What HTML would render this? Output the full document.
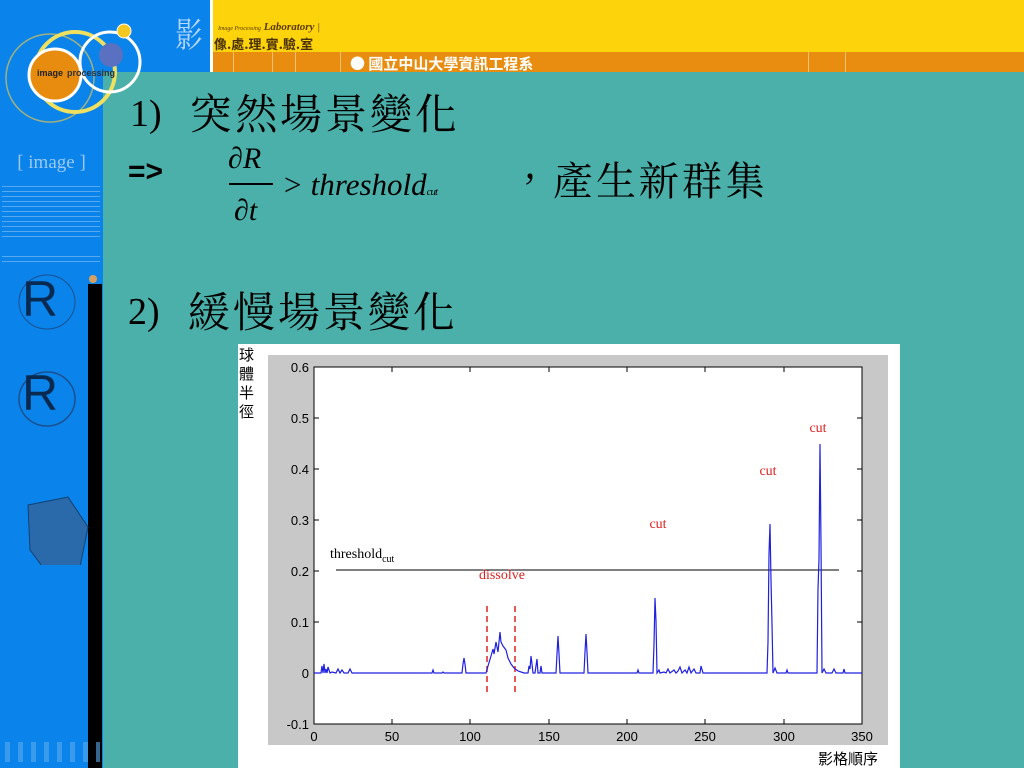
<!DOCTYPE html>
<html><head><meta charset="utf-8"><style>
*{margin:0;padding:0}
body{width:1024px;height:768px;position:relative;overflow:hidden;background:#4bb0a9;font-family:"Liberation Serif","Noto Serif CJK TC",serif}
.a{position:absolute}
.cjk{font-family:"Liberation Serif","Noto Serif CJK TC","Noto Serif CJK SC",serif}
</style></head><body>
<div class="a" style="left:0;top:0;width:210px;height:72px;background:#0a84ea"></div>
<div class="a" style="left:0;top:72px;width:103px;height:696px;background:#0a84ea"></div>
<div class="a" style="left:88px;top:284px;width:14px;height:484px;background:#000"></div>
<div class="a" style="left:89px;top:275px;width:8px;height:8px;border-radius:50%;background:#d8a060"></div>
<div class="a" style="left:210px;top:0;width:3px;height:72px;background:#fff"></div>
<div class="a" style="left:213px;top:0;width:811px;height:55px;background:#fdd30c"></div>
<div class="a" style="left:213px;top:52px;width:811px;height:20px;background:#e88d10"></div>
<div class="a" style="left:233px;top:52px;width:1px;height:20px;background:#f6c070"></div>
<div class="a" style="left:272px;top:52px;width:1px;height:20px;background:#f6c070"></div>
<div class="a" style="left:295px;top:52px;width:1px;height:20px;background:#f6c070"></div>
<div class="a" style="left:340px;top:52px;width:1px;height:20px;background:#f6c070"></div>
<div class="a" style="left:808px;top:52px;width:1px;height:20px;background:#f6c070"></div>
<div class="a" style="left:845px;top:52px;width:1px;height:20px;background:#f6c070"></div>
<div class="a" style="left:350px;top:53px;width:250px;font:bold 15px 'Noto Sans CJK TC',sans-serif;color:#fff;white-space:nowrap">● 國立中山大學資訊工程系</div>
<div class="a" style="left:218px;top:21px;font:italic 11px 'Liberation Serif';color:#5a3a00"><span style="font-size:6px">Image Processing</span> <b>Laboratory</b> |</div>
<div class="a" style="left:214px;top:34px;font:bold 13px 'Noto Sans CJK TC',sans-serif;color:#4a3000;white-space:nowrap">像.處.理.實.驗.室</div>
<div class="a cjk" style="left:172px;top:8px;font-size:34px;color:#b8d8ff;transform:scaleX(.8)">影</div>
<svg class="a" style="left:0;top:0" width="210" height="130">
<circle cx="50" cy="78" r="44" fill="none" stroke="#a0b080" stroke-width="1.5"/>
<circle cx="75" cy="72" r="40" fill="none" stroke="#f0e060" stroke-width="4"/>
<circle cx="110" cy="62" r="30" fill="none" stroke="#fff" stroke-width="3"/>
<circle cx="111" cy="55" r="12" fill="#5a70c0"/>
<circle cx="124" cy="31" r="7" fill="#f5c820" stroke="#fff"/>
<circle cx="55" cy="75" r="26" fill="#e88c10" stroke="#fff" stroke-width="3"/>
<text x="37" y="76" font-size="9" font-family="Liberation Sans" font-weight="bold" fill="#222">image</text>
<text x="67" y="76" font-size="9" font-family="Liberation Sans" font-weight="bold" fill="#333">processing</text>
</svg>
<div class="a" style="left:0;top:152px;width:103px;text-align:center;font:19px 'Liberation Serif';color:#9cc8f0">[ image ]</div>
<div class="a" style="left:2px;top:182px;width:98px;height:55px;background:repeating-linear-gradient(#0a84ea 0 4px,#5aa8ee 4px 5px)"></div>
<div class="a" style="left:2px;top:252px;width:98px;height:12px;background:repeating-linear-gradient(#0a84ea 0 4px,#5aa8ee 4px 5px)"></div>
<svg class="a" style="left:10px;top:265px" width="80" height="300">
<ellipse cx="37" cy="37" rx="28" ry="27" fill="none" stroke="#1a5090" stroke-width="1"/>
<ellipse cx="37" cy="134" rx="28" ry="27" fill="none" stroke="#1a5090" stroke-width="1.5"/>
<path d="M18 240l40 -8l20 30l-8 40l-35 3l-15-20z" fill="#2a6aaa" stroke="#124070"/>
</svg>
<div class="a" style="left:22px;top:270px;font:50px 'Liberation Sans';color:#082a50">R</div>
<div class="a" style="left:22px;top:364px;font:50px 'Liberation Sans';color:#082a50">R</div>
<div class="a" style="left:5px;top:742px;width:95px;height:20px;background:repeating-linear-gradient(90deg,#5aa8ee 0 5px,transparent 5px 13px);opacity:.6"></div>

<div class="a" style="left:130px;top:92px;font:38px 'Liberation Serif';color:#000">1)</div>
<div class="a cjk" style="left:190px;top:82px;font-size:42px;letter-spacing:3px;color:#000;white-space:nowrap">突然場景變化</div>
<div class="a" style="left:128px;top:155px;font:bold 30px 'Liberation Sans';color:#000">=&gt;</div>
<div class="a" style="left:228px;top:142px;font:italic 30px 'Liberation Serif'">∂R</div>
<div class="a" style="left:229px;top:183px;width:44px;height:1.5px;background:#000"></div>
<div class="a" style="left:234px;top:194px;font:italic 30px 'Liberation Serif'">∂t</div>
<div class="a" style="left:282px;top:167px;font:italic 31px 'Liberation Serif';white-space:nowrap">&gt; threshold<span style="font-size:11px;letter-spacing:-1px">cut</span></div>
<div class="a cjk" style="left:510px;top:150px;font-size:40px;letter-spacing:3px;white-space:nowrap">，產生新群集</div>
<div class="a" style="left:128px;top:290px;font:38px 'Liberation Serif';color:#000">2)</div>
<div class="a cjk" style="left:188px;top:280px;font-size:42px;letter-spacing:3px;white-space:nowrap">緩慢場景變化</div>

<svg class="a" style="left:238px;top:344px" width="662" height="424" font-family="Liberation Sans">
<rect width="662" height="424" fill="#fff"/>
<rect x="30" y="11" width="620" height="390" fill="#c8c8c8"/>
<rect x="76" y="23" width="548" height="357" fill="#fff" stroke="#000"/>
<g font-size="13" fill="#000" text-anchor="end">
<text x="71" y="28">0.6</text><text x="71" y="79">0.5</text><text x="71" y="130">0.4</text><text x="71" y="181">0.3</text><text x="71" y="232">0.2</text><text x="71" y="283">0.1</text><text x="71" y="334">0</text><text x="71" y="385">-0.1</text>
</g>
<g font-size="13" text-anchor="middle">
<text x="76" y="397">0</text><text x="154" y="397">50</text><text x="232" y="397">100</text><text x="311" y="397">150</text><text x="389" y="397">200</text><text x="467" y="397">250</text><text x="546" y="397">300</text><text x="624" y="397">350</text>
</g>
<g stroke="#000" stroke-width="1">
<path d="M76 74h5M76 125h5M76 176h5M76 227h5M76 278h5M76 329h5M624 74h-5M624 125h-5M624 176h-5M624 227h-5M624 278h-5M624 329h-5M154 380v-5M232 380v-5M311 380v-5M389 380v-5M467 380v-5M546 380v-5M154 23v5M232 23v5M311 23v5M389 23v5M467 23v5M546 23v5"/>
<path d="M98 226H601"/>
</g>
<text x="92" y="214" font-family="Liberation Serif" font-size="14">threshold<tspan font-size="10" dy="4">cut</tspan></text>
<g fill="#e02020" font-family="Liberation Serif" font-size="14" text-anchor="middle">
<text x="264" y="235">dissolve</text><text x="420" y="184">cut</text><text x="530" y="131">cut</text><text x="580" y="88">cut</text>
</g>
<path d="M249 262v90M277 262v90" stroke="#e02020" stroke-width="1.5" stroke-dasharray="6,4"/>
<polyline fill="none" stroke="#2020e0" stroke-width="1.2" points="76,329 83,329 84,322 85,329 86,320 87,329 88,325 89,329 90,323 92,329 94,328 98,329 100,325 102,329 104,326 106,329 110,329 112,325 114,329 194,329 195,326 196,329 204,329 205,328 206,329 224,329 225,320 226,314 227,320 228,329 248,329 250,322 253,312 255,305 256,310 258,298 260,308 262,288 263,298 265,302 268,306 270,314 273,320 276,324 280,327 286,329 290,329 291,322 292,325 293,312 294,320 295,329 297,329 298,322 299,315 300,329 302,329 303,322 304,329 318,329 319,310 320,292 321,310 322,329 346,329 347,308 348,290 349,308 350,329 399,329 400,326 401,329 415,329 416,300 417,254 418,277 419,329 421,326 422,329 426,328 428,329 430,325 432,329 436,326 438,329 440,327 442,323 444,329 447,326 449,329 451,323 453,329 456,325 458,329 462,329 463,322 465,329 529,329 530,298 531,210 532,180 533,236 534,280 535,329 537,324 539,329 548,329 549,326 550,329 579,329 580,245 581,215 582,100 583,200 584,329 586,325 588,329 594,329 596,325 598,329 605,329 606,325 607,329 624,329"/>
<g font-family="Noto Sans CJK TC,sans-serif" font-size="15" fill="#000">
<text x="1" y="16">球</text><text x="1" y="35">體</text><text x="1" y="54">半</text><text x="1" y="73">徑</text>
<text x="580" y="420">影格順序</text>
</g>
</svg>
</body></html>
